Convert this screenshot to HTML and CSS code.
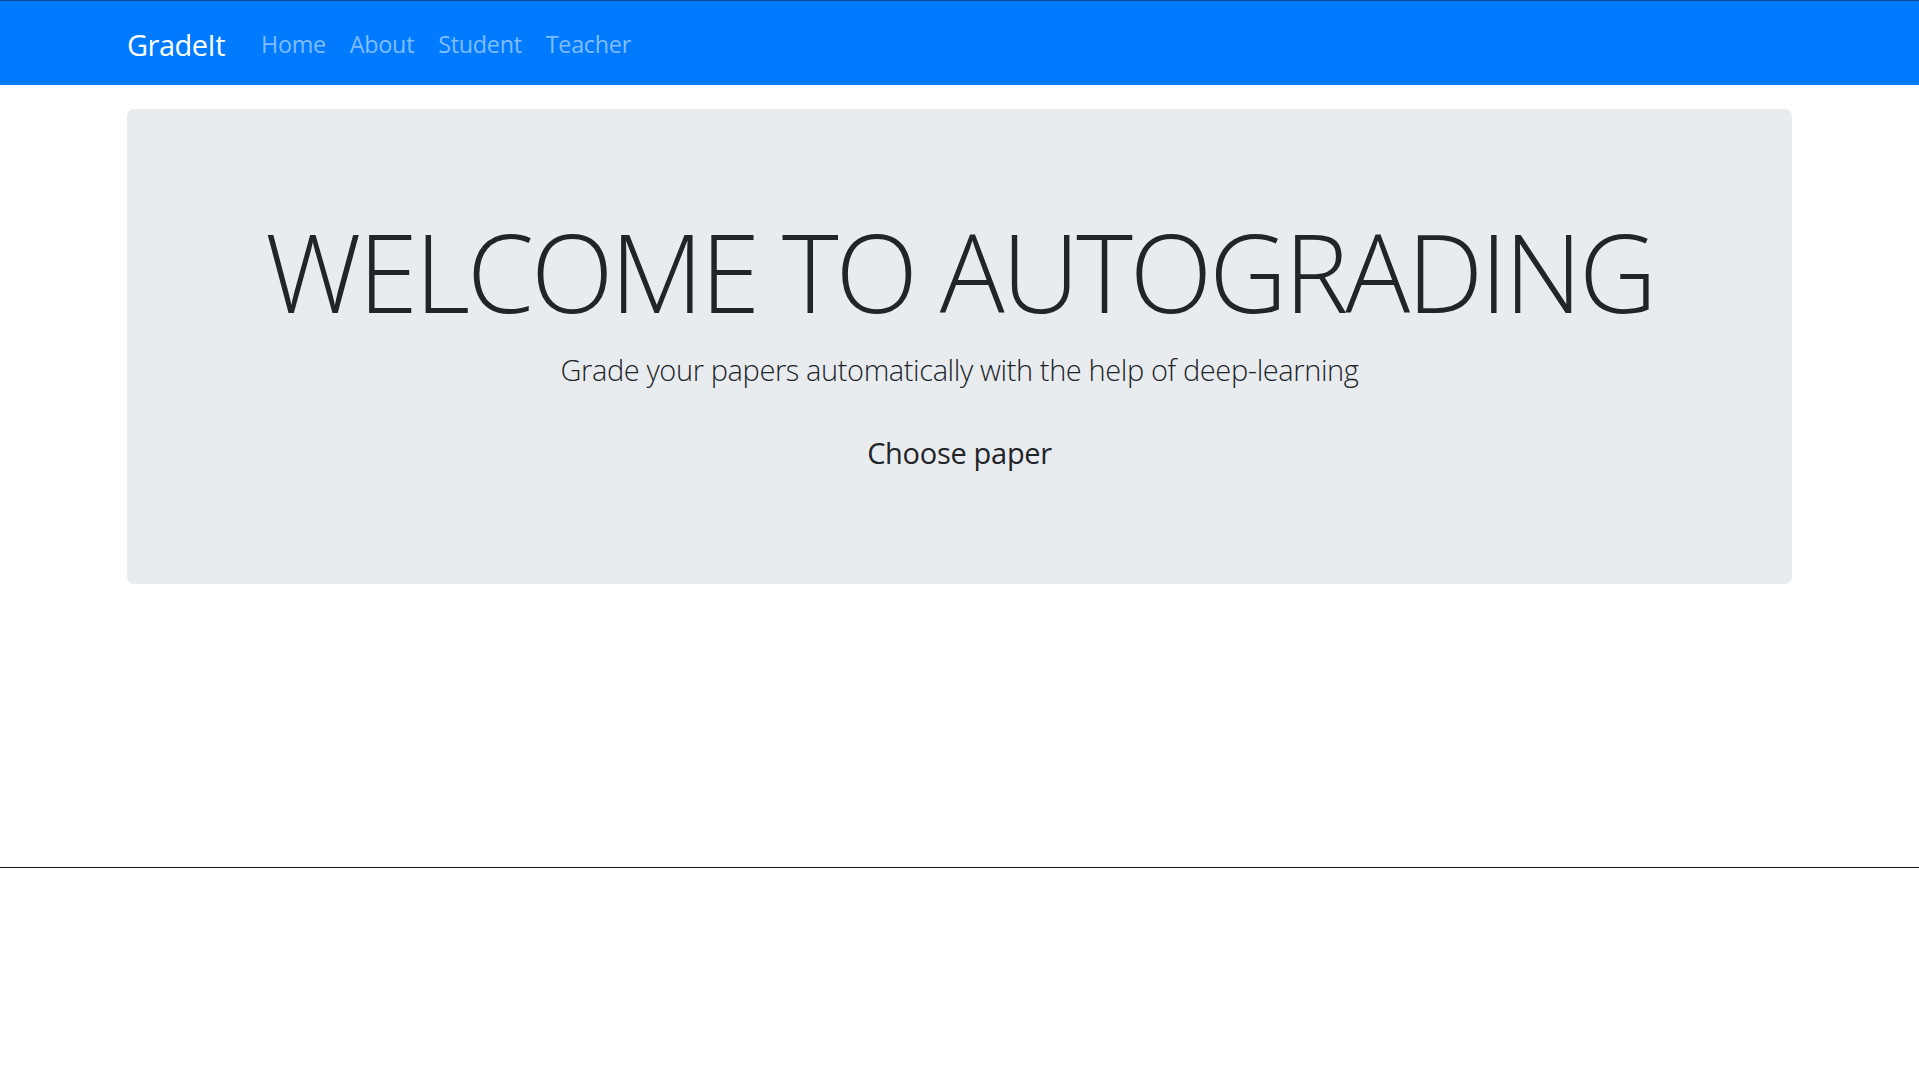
FILE: index.html
```html
<!DOCTYPE html>
<html lang="en">
<head>
<meta charset="utf-8">
<title>GradeIt</title>
<link rel="stylesheet" href="styles.css">
</head>
<body>
<nav class="navbar">
  <div class="container nav-inner">
    <a class="brand" href="#">GradeIt</a>
    <ul class="nav-links">
      <li><a href="#">Home</a></li>
      <li><a href="#">About</a></li>
      <li><a href="#">Student</a></li>
      <li><a href="#">Teacher</a></li>
    </ul>
  </div>
</nav>
<main class="container">
  <section class="jumbotron">
    <h1 class="display">WELCOME TO AUTOGRADING</h1>
    <p class="lead">Grade your papers automatically with the help of deep-learning</p>
    <label class="choose-btn">Choose paper</label>
  </section>
</main>
<footer class="footer"></footer>
</body>
</html>
```

FILE: styles.css
```css
* { box-sizing: border-box; }
html, body { margin: 0; padding: 0; }
body {
  font-family: "Open Sans", "Noto Sans", "Liberation Sans", sans-serif;
  color: #212529;
  background: #fff;
}
.container {
  width: 1710px;
  max-width: 100%;
  margin: 0 auto;
  padding: 0 22.5px;
}
.navbar {
  background: #007bff;
  border-top: 1px solid #0d4d8f;
  height: 85px;
  display: flex;
  align-items: center;
  padding-top: 2px;
}
.nav-inner {
  display: flex;
  align-items: center;
}
.brand {
  color: #fff;
  text-decoration: none;
  font-size: 29px;
  line-height: 45px;
  margin-right: 24px;
  letter-spacing: -0.5px;
}
.nav-links {
  display: flex;
  list-style: none;
  margin: 0;
  padding: 0;
}
.nav-links a {
  display: block;
  padding: 0 12px;
  font-size: 23.3px;
  line-height: 36px;
  color: rgba(255,255,255,0.5);
  text-decoration: none;
  letter-spacing: -0.25px;
}
.jumbotron {
  margin-top: 24px;
  background: #e9ecef;
  border-radius: 7px;
  padding: 98px 48px 96px;
  display: flex;
  flex-direction: column;
  align-items: center;
  text-align: center;
  height: 475px;
}
.display {
  margin: 0 0 10px;
  font-size: 108px;
  font-weight: 300;
  line-height: 129.6px;
  letter-spacing: -3.1px;
}
.lead {
  margin: 0 0 26px;
  font-size: 29px;
  font-weight: 300;
  line-height: 45px;
  letter-spacing: -0.4px;
}
.choose-btn {
  display: inline-block;
  padding: 12px 24px;
  font-size: 29px;
  line-height: 45px;
  font-weight: 400;
  letter-spacing: -0.3px;
}
.footer {
  margin-top: 283px;
  border-top: 1px solid #111417;
  height: 1px;
}
```
